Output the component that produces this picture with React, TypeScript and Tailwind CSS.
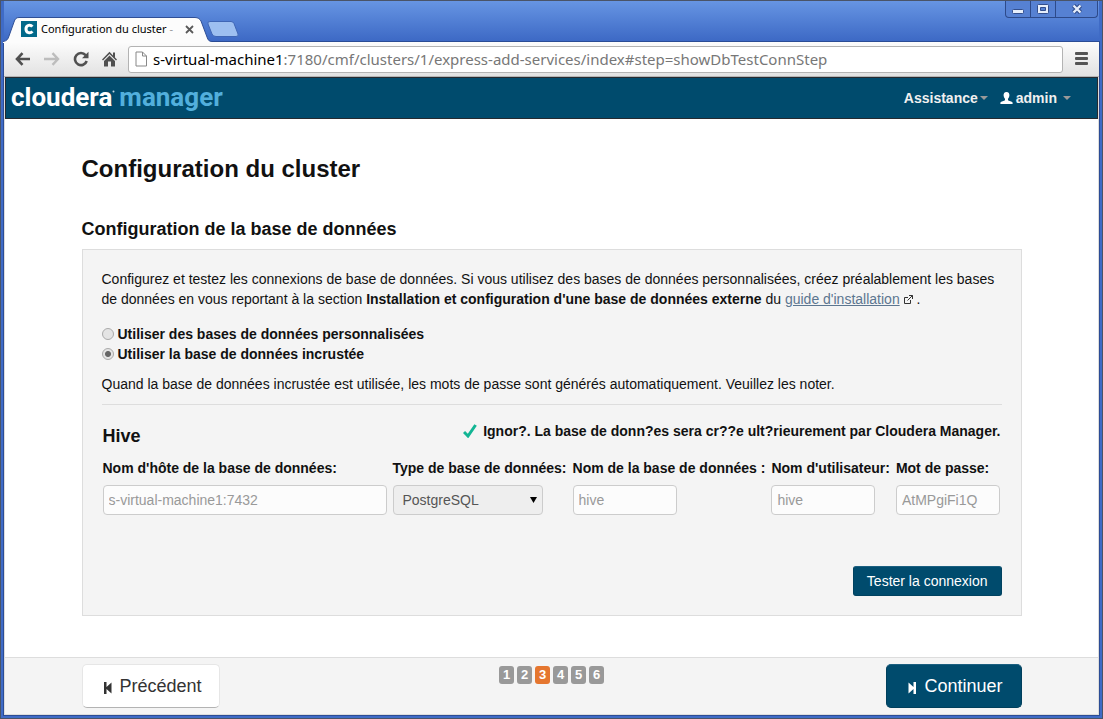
import React, { useState } from "react";

function TitleBar() {
  return (
    <div className="flex h-10 items-start justify-between bg-linear-to-b from-[#6795e3] to-[#3d69c5] pr-px">
      <div className="flex items-start pt-4">
        <div className="relative flex h-6 w-[203px] items-center pl-[17px]">
          <svg className="absolute inset-0 overflow-visible" width="206" height="26" viewBox="0 0 206 26" aria-hidden="true">
            <path d="M-1 26V24.500C3 24 4 22 5 19L10 5C11 2 12 .5 15 .5H191C194 .5 196 2 197 4L203 20C204 23 205 24.500 208 24.500V26Z" fill="#fcfcfc" />
            <path d="M-1 24.500C3 24 4 22 5 19L10 5C11 2 12 .5 15 .5H191C194 .5 196 2 197 4L203 20C204 23 205 24.500 208 24.500" fill="none" stroke="#2f4f96" />
          </svg>
          <svg className="relative shrink-0" width="16" height="16" viewBox="0 0 16 16" aria-hidden="true">
            <path fill="#02698a" d="M0 0h16v16H0z" />
            <path d="M11.400 5.600C9.500 3.200 5 3.800 5 8s4.500 4.800 6.400 2.400" fill="none" stroke="#fff" strokeWidth="3" />
          </svg>
          <span className="relative ml-1 w-[138px] whitespace-nowrap font-['Noto_Sans','Open_Sans',sans-serif] text-[11px] leading-4 text-black">
            Configuration du cluster <span className="text-[#999]">-</span>
          </span>
          <button type="button" aria-label="Fermer l'onglet" className="relative ml-[6px]">
            <svg width="9" height="9" viewBox="0 0 9 9"><path d="M1 1l7 7M8 1L1 8" stroke="#5a5a5a" strokeWidth="1.800" /></svg>
          </button>
        </div>
        <button type="button" aria-label="Nouvel onglet" className="mt-1">
          <svg width="32" height="17" viewBox="0 0 32 17">
            <path d="M3 .5H24Q26 .5 27 2.500L31 13Q32 15.500 29 15.500H9Q6 15.500 5 13L1 3Q0 .5 3 .5Z" fill="#9dbff0" stroke="#3f66b5" />
          </svg>
        </button>
      </div>
      <div className="flex h-[17px] overflow-hidden rounded-b border border-t-0 border-[#2d4a8a] bg-[#5681d3]">
        <button type="button" aria-label="Réduire" className="flex w-[25px] items-end justify-center border-r border-[#2d4a8a] pb-[3px]">
          <svg width="12" height="5" viewBox="0 0 12 5"><rect x=".5" y=".5" width="11" height="4" rx="1" fill="#e6eefb" stroke="#334f8e" /></svg>
        </button>
        <button type="button" aria-label="Agrandir" className="flex w-[25px] items-center justify-center border-r border-[#2d4a8a]">
          <svg width="12" height="10" viewBox="0 0 12 10"><rect x=".5" y=".5" width="11" height="9" rx="1" fill="#e6eefb" stroke="#334f8e" /><path d="M3.500 3.500h5v3h-5z" fill="#5681d3" stroke="#334f8e" /></svg>
        </button>
        <button type="button" aria-label="Fermer" className="flex w-[41px] items-center justify-center">
          <svg width="12" height="10" viewBox="0 0 12 10"><path d="M2.500 1.500l7 7M9.500 1.500l-7 7" stroke="#334f8e" strokeWidth="4.500" /><path d="M2.500 1.500l7 7M9.500 1.500l-7 7" stroke="#e6eefb" strokeWidth="2.300" /></svg>
        </button>
      </div>
    </div>
  );
}

function Toolbar() {
  return (
    <div className="flex h-[35px] items-center border-b border-[#b5b5b5] bg-linear-to-b from-[#fcfcfc] to-[#e2e2e2] pr-[11px] pl-[11px] text-[#505050]">
      <button type="button" aria-label="Précédent (page)" className="w-[29px]">
        <svg width="16" height="14" viewBox="0 0 16 14" fill="none" stroke="currentColor" strokeWidth="2.600"><path d="M7.500 1.200L2 7l5.500 5.800M2 7h13" /></svg>
      </button>
      <button type="button" aria-label="Suivant (page)" className="w-[29px] text-[#bdbdbd]">
        <svg width="16" height="14" viewBox="0 0 16 14" fill="none" stroke="currentColor" strokeWidth="2.400"><path d="M8.500 1.200L14 7l-5.500 5.800M14 7H0" /></svg>
      </button>
      <button type="button" aria-label="Actualiser" className="w-[29px]">
        <svg width="16" height="16" viewBox="0 0 16 16"><path d="M12.600 4.200A6 6 0 1 0 13.700 10" fill="none" stroke="currentColor" strokeWidth="2.600" /><path d="M15.500 .8V7.300H9Z" fill="currentColor" /></svg>
      </button>
      <button type="button" aria-label="Accueil" className="w-[26px]">
        <svg width="15" height="16" viewBox="0 0 15 16" fill="currentColor"><path d="M7.500 .8L0 8.500l1 1L7.500 3 14 9.500l1-1-2-2V1.500h-2v3Z" /><path d="M7.500 4.500L2 10v5.500h4v-5h3v5h4V10Z" /></svg>
      </button>
      <label className="flex h-[27px] min-w-0 flex-1 items-center rounded-[3px] border border-[#b3b3b3] bg-white pl-[6px] font-['Noto_Sans','Open_Sans',sans-serif] text-[15px] leading-6">
        <svg width="13" height="16" viewBox="0 0 13 16" className="mr-[5px] shrink-0" fill="#fff" stroke="#888"><path d="M1 1h6.500l4 4v10H1Z" /><path d="M7.500 1v4h4" fill="none" /></svg>
        <span className="text-black">s-virtual-machine1</span>
        <input
          type="text"
          aria-label="Adresse"
          defaultValue=":7180/cmf/clusters/1/express-add-services/index#step=showDbTestConnStep"
          className="min-w-0 flex-1 bg-transparent text-[#777] outline-none"
        />
      </label>
      <button type="button" aria-label="Menu" className="ml-[12px]">
        <svg width="13" height="14" viewBox="0 0 13 14" fill="#555"><rect width="13" height="3" rx="1" /><rect y="5" width="13" height="3" rx="1" /><rect y="10" width="13" height="3" rx="1" /></svg>
      </button>
    </div>
  );
}

function Caret() {
  return <svg width="8" height="4" viewBox="0 0 8 4" aria-hidden="true"><path d="M0 0h8L4 4Z" fill="#999" /></svg>;
}

function AppHeader() {
  return (
    <header className="flex h-[42px] items-center justify-between border border-[#252a30] bg-[#004b6d] pr-[26px] pl-[5px]">
      <a href="#accueil" className="flex items-start gap-1 pb-[2px] font-[Roboto,'Noto_Sans',sans-serif] text-[26px] leading-8 font-bold">
        <span className="flex text-white">
          cloudera
          <svg className="mt-[9px]" width="3" height="3" viewBox="0 0 3 3" aria-hidden="true"><circle cx="1.500" cy="1.500" r="1" fill="#c5d6df" /></svg>
        </span>
        <span className="text-[#52afdc]">manager</span>
      </a>
      <nav className="flex items-center gap-3 text-[14px] leading-5 font-bold text-[#f0f0f0]">
        <a href="#assistance" className="flex items-center gap-[2px]">Assistance<Caret /></a>
        <a href="#admin" className="flex items-center gap-[3px]">
          <svg width="13" height="12" viewBox="0 0 13 12" fill="#fff" aria-hidden="true"><path d="M6.500 0C8.600 0 9.600 1.500 9.400 3.600 9.200 5.500 8.300 6.300 8 7v1.200c.8.600 4 1 4.600 2.300V12H.4v-1.500C1 9.200 4.200 8.800 5 8.200V7C4.700 6.300 3.800 5.500 3.600 3.600 3.400 1.500 4.400 0 6.500 0Z" /></svg>
          admin
          <span className="ml-[3px]"><Caret /></span>
        </a>
      </nav>
    </header>
  );
}

const inputClass = "block h-[30px] rounded border border-[#ccc] bg-[#fcfcfc] px-[5px] text-[14px] leading-5 text-[#999] outline-none";

function TextField({ id, label, value, wide }: { id: string; label: string; value: string; wide?: boolean }) {
  return (
    <div>
      <label htmlFor={id} className="mb-[7px] block leading-5 font-bold whitespace-nowrap">{label}</label>
      <input id={id} type="text" disabled defaultValue={value} className={wide ? `${inputClass} w-[284px]` : `${inputClass} w-[104px]`} />
    </div>
  );
}

function DatabaseForm() {
  const [mode, setMode] = useState("embedded");
  const radio = "size-3 appearance-none rounded-full border border-[#aaa] bg-[#e4e4e4] checked:bg-[radial-gradient(circle,#666_0_2.5px,#e4e4e4_3.5px)]";
  return (
    <section className="border border-[#ddd] bg-[#f4f4f4] p-[19px]">
      <p>
        Configurez et testez les connexions de base de données. Si vous utilisez des bases de données personnalisées, créez préalablement les bases de données en vous reportant à la section <strong>Installation et configuration d'une base de données externe</strong> du{" "}
        <a href="#guide" className="text-[#5c7690] underline">guide d'installation</a>{" "}
        <svg className="inline align-baseline" width="9" height="9" viewBox="0 0 9 9" fill="none" stroke="#333" aria-hidden="true"><path d="M4 2.500H.5v6h6V5M5 .5h3.500V4M8.500 .5L3.500 5.500" /></svg>{" "}
        .
      </p>
      <fieldset className="mt-[15px] font-bold">
        <label className="flex items-center gap-1">
          <input type="radio" name="mode" checked={mode === "custom"} onChange={() => setMode("custom")} className={radio} />
          Utiliser des bases de données personnalisées
        </label>
        <label className="flex items-center gap-1">
          <input type="radio" name="mode" checked={mode === "embedded"} onChange={() => setMode("embedded")} className={radio} />
          Utiliser la base de données incrustée
        </label>
      </fieldset>
      <p className="mt-[10px]">Quand la base de données incrustée est utilisée, les mots de passe sont générés automatiquement. Veuillez les noter.</p>
      <hr className="mt-[10px] border-[#ddd]" />
      <div className="mt-4 flex items-start justify-between px-px">
        <h3 className="text-[18px] leading-[30px] font-bold">Hive</h3>
        <p className="flex items-center gap-[6px] font-bold">
          <svg width="14" height="14" viewBox="0 0 14 14" fill="none" stroke="#12b594" strokeWidth="3" aria-hidden="true"><path d="M1 8L5 12 12.600 1" /></svg>
          Ignor?. La base de donn?es sera cr??e ult?rieurement par Cloudera Manager.
        </p>
      </div>
      <div className="mt-[7px] flex flex-wrap gap-[6px] pl-px">
        <TextField id="hote" label="Nom d'hôte de la base de données:" value="s-virtual-machine1:7432" wide />
        <div>
          <label htmlFor="type" className="mb-[7px] block leading-5 font-bold whitespace-nowrap">Type de base de données:</label>
          <div className="relative w-[150px]">
            <select id="type" disabled className="block h-[30px] w-full appearance-none rounded border border-[#ccc] bg-[#eee] pl-[9px] text-[14px] leading-5 text-[#555] opacity-100">
              <option>PostgreSQL</option>
            </select>
            <svg className="absolute top-3 right-[6px]" width="7" height="6" viewBox="0 0 7 6" aria-hidden="true"><path d="M0 0h7L3.500 6Z" fill="#000" /></svg>
          </div>
        </div>
        <TextField id="base" label="Nom de la base de données :" value="hive" />
        <TextField id="utilisateur" label="Nom d'utilisateur:" value="hive" />
        <TextField id="passe" label="Mot de passe:" value="AtMPgiFi1Q" />
      </div>
      <div className="mt-[51px] flex justify-end">
        <button type="button" className="h-[30px] rounded-[3px] border border-t-[#1b5f80] border-[#004260] bg-[#004b6d] px-[13px] text-[14px] text-white">Tester la connexion</button>
      </div>
    </section>
  );
}

function StepFooter() {
  return (
    <footer className="border-t border-[#ddd] bg-[#f4f4f4] pt-[6px] pb-[6px]">
      <div className="mx-auto flex max-w-[940px] items-start justify-between text-[18px]">
        <div className="flex flex-1 justify-start">
          <button type="button" className="flex h-11 items-center gap-2 rounded-[5px] border border-[#e6e6e6] border-b-[#b3b3b3] bg-white pr-[17px] pl-[21px] text-[#333]">
            <svg width="8" height="12" viewBox="0 0 8 12" className="mt-1" fill="#333" aria-hidden="true"><path d="M0 0h2.500v5L7.500 .5v11L2.500 7v5H0Z" /></svg>
            Précédent
          </button>
        </div>
        <ol className="flex gap-[3px] pt-[2px] text-[13px] leading-[18px] font-bold text-white">
          {[1, 2, 3, 4, 5, 6].map((n) => (
            <li key={n} className={n === 3 ? "w-[15px] rounded-[3px] bg-[#e5762f] text-center" : "w-[15px] rounded-[3px] bg-[#999] text-center"}>{n}</li>
          ))}
        </ol>
        <div className="flex flex-1 justify-end">
          <button type="button" className="flex h-11 items-center gap-2 rounded-[5px] border border-t-[#1b5f80] border-[#003f5c] bg-[#004b6d] pr-[18px] pl-[21px] text-white">
            <svg width="8" height="12" viewBox="0 0 8 12" className="mt-1" fill="#fff" aria-hidden="true"><path d="M8 0H5.500v5L.5 .5v11L5.500 7v5H8Z" /></svg>
            Continuer
          </button>
        </div>
      </div>
    </footer>
  );
}

export default function App() {
  return (
    <div className="flex min-h-screen flex-col border border-[#4a5468] bg-[#3f6bc6] font-['Liberation_Sans',Arial,sans-serif] text-[14px] leading-5 text-[#111]">
      <div className="px-[3px]"><TitleBar /></div>
      <div className="mx-[2px] mb-[2px] flex flex-1 flex-col border border-[#2b4c95] bg-white">
        <Toolbar />
        <div className="flex flex-1 flex-col border-r border-b border-l border-[#ddd]">
          <AppHeader />
          <main className="flex-1 px-4 pt-[30px] pb-10">
            <div className="mx-auto max-w-[940px]">
              <h1 className="text-[24px] leading-10 font-bold">Configuration du cluster</h1>
              <h2 className="mt-5 text-[18px] leading-10 font-bold">Configuration de la base de données</h2>
              <DatabaseForm />
            </div>
          </main>
          <StepFooter />
        </div>
      </div>
    </div>
  );
}
